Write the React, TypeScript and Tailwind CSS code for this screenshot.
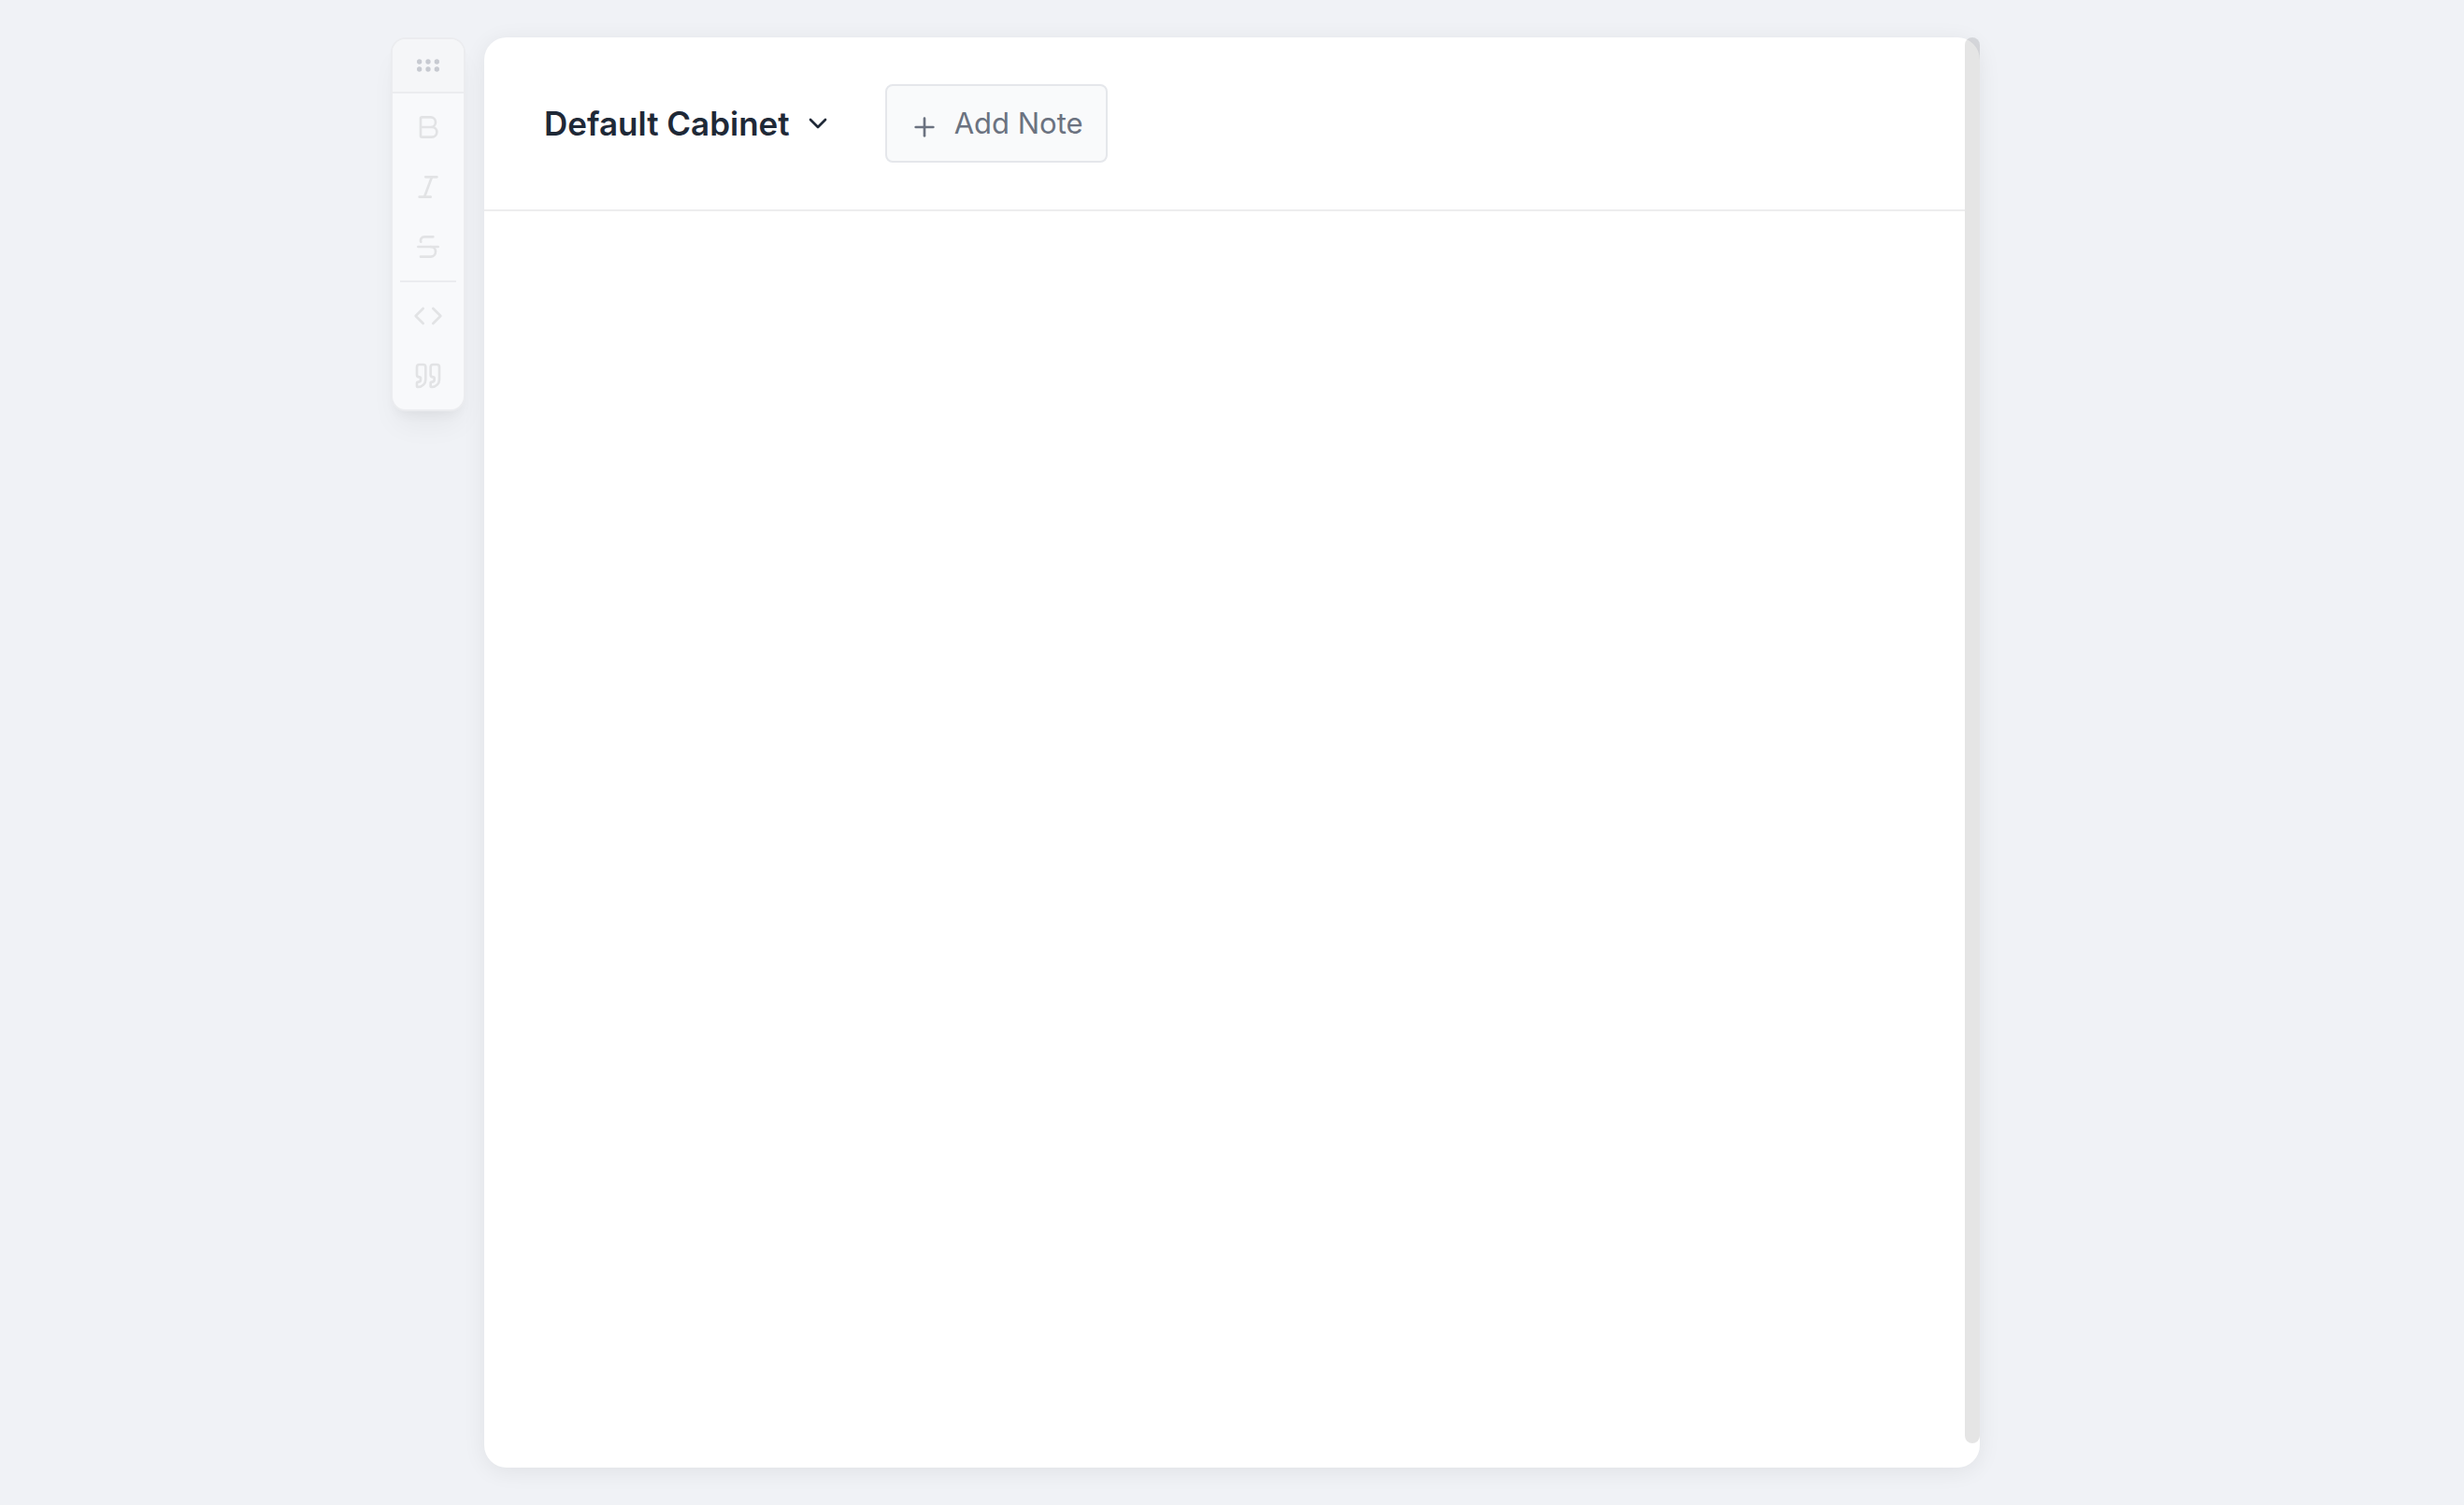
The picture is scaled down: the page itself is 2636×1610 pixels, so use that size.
import { Bold, ChevronDown, Code, GripHorizontal, Italic, Plus, Quote, Strikethrough } from "lucide-react";
import type { LucideIcon } from "lucide-react";

function ToolButton({ icon: Icon, label }: { icon: LucideIcon; label: string }) {
  return (
    <button
      type="button"
      aria-label={label}
      disabled
      className="flex h-14 w-14 items-center justify-center rounded-lg text-[#e2e3e5]"
    >
      <Icon size={32} />
    </button>
  );
}

function Toolbar() {
  return (
    <aside
      aria-label="Formatting"
      className="w-20 shrink-0 overflow-hidden rounded-2xl border-2 border-[#ebecef] bg-[#f8f9fb] shadow-[0_20px_30px_-6px_rgba(0,0,0,0.05),0_8px_12px_-4px_rgba(0,0,0,0.04)]"
    >
      <button
        type="button"
        aria-label="Move toolbar"
        className="flex w-full items-center justify-center border-b-2 border-[#ebecef] bg-[#f5f6f8] py-3 text-[#c7cad1]"
      >
        <GripHorizontal size={32} fill="currentColor" />
      </button>
      <div className="flex flex-col items-center gap-2 py-2">
        <ToolButton icon={Bold} label="Bold" />
        <ToolButton icon={Italic} label="Italic" />
        <ToolButton icon={Strikethrough} label="Strikethrough" />
        <hr className="w-15 border-t-2 border-[#ebecef]" />
        <ToolButton icon={Code} label="Code" />
        <ToolButton icon={Quote} label="Quote" />
      </div>
    </aside>
  );
}

export default function App() {
  return (
    <div className="grid min-h-screen grid-cols-[1fr_minmax(0,1600px)_1fr] gap-x-5 bg-[#f0f2f6] py-10 font-['Inter',sans-serif]">
      <div className="flex items-start justify-end">
        <Toolbar />
      </div>
      <main className="flex rounded-3xl bg-white shadow-[0_4px_24px_rgba(0,0,0,0.07)]">
        <section className="min-w-0 flex-1">
          <header className="flex items-center gap-14 border-b-2 border-[#ededee] px-16 py-[50px]">
            <button type="button" className="flex items-center gap-3.5 text-[35px] leading-12 font-semibold text-[#1f2937]">
              Default Cabinet
              <ChevronDown size={32} />
            </button>
            <button
              type="button"
              className="flex h-21 items-center gap-4 rounded-lg border-2 border-[#e5e7eb] bg-[#f9fafb] px-6 text-[31px] leading-10 text-[#6b7280]"
            >
              <Plus size={32} className="mt-2" />
              Add Note
            </button>
          </header>
        </section>
        <div className="mb-[26px] w-4 shrink-0 rounded-full bg-black/10" />
      </main>
    </div>
  );
}
